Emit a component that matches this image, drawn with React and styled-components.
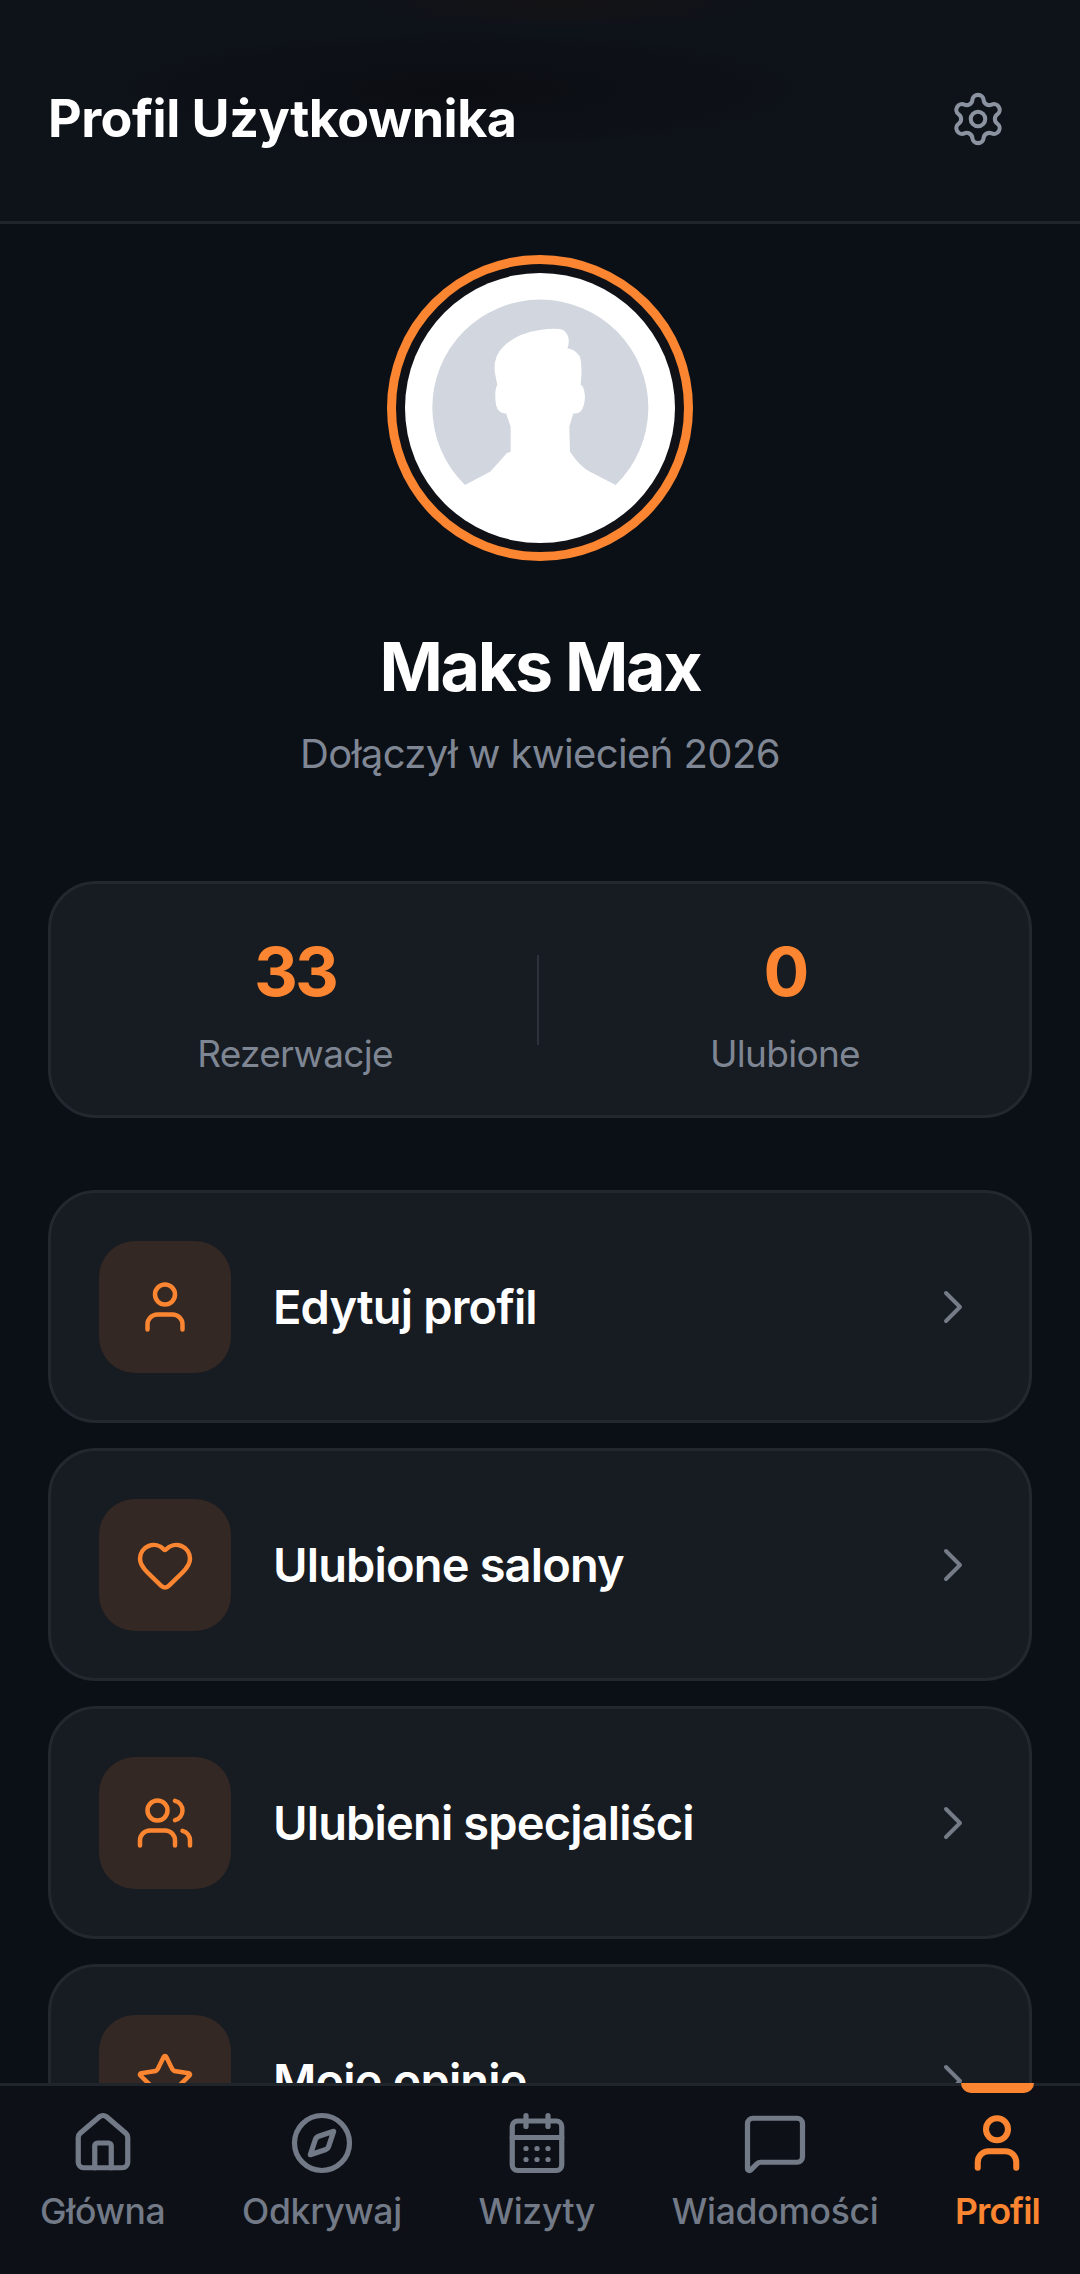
import React from 'react';
import styled, { createGlobalStyle } from 'styled-components';
import {
  Settings, User, Heart, Users, Star, ChevronRight, House, Compass, CalendarDays, MessageSquare,
} from 'lucide-react';

const Global = createGlobalStyle`
  html, body { margin: 0; padding: 0; background: #0b0f16; }
  * { box-sizing: border-box; }
`

const orange = '#fb8530';

const Screen = styled.div`
  width: 1080px;
  height: 2274px;
  display: flex;
  flex-direction: column;
  overflow: hidden;
  background: #0b0f16;
  color: #fff;
  font-family: Inter, "Noto Sans", sans-serif;
`
const Header = styled.header`
  flex: none;
  height: 224px;
  padding: 16px 48px 0 48px;
  display: flex;
  align-items: center;
  justify-content: space-between;
  background:
    radial-gradient(ellipse 360px 60px at 460px 90px, rgba(8, 9, 12, 0.55), transparent),
    radial-gradient(ellipse 200px 24px at 560px 4px, rgba(30, 20, 14, 0.35), transparent),
    #0e1219;
  border-bottom: 3px solid #20242b;
`
const Title = styled.h1`
  margin: 0;
  font-size: 52px;
  font-weight: 700;
  letter-spacing: -0.5px;
`
const SettingsButton = styled.div`
  display: flex;
  margin-right: 25px;
  color: #8b92a0;
`
const Content = styled.main`
  flex: 1;
  min-height: 0;
  overflow: hidden;
  padding: 31px 48px 0;
  display: flex;
  flex-direction: column;
`
const Profile = styled.section`
  display: flex;
  flex-direction: column;
  align-items: center;
`
const AvatarRing = styled.div`
  width: 306px;
  height: 306px;
  padding: 9px;
  border-radius: 50%;
  border: 9px solid ${orange};
  background: #0f1116;
`
const AvatarDisc = styled.svg`
  display: block;
  width: 100%;
  height: 100%;
  border-radius: 50%;
  background: #fff;
`
const Name = styled.h2`
  margin: 63px 0 0;
  font-size: 68px;
  line-height: 84px;
  font-weight: 700;
  letter-spacing: -2.2px;
`
const Joined = styled.p`
  margin: 20px 0 0;
  font-size: 40px;
  line-height: 52px;
  letter-spacing: -0.6px;
  color: #808794;
`
const StatsCard = styled.section`
  margin-top: 101px;
  height: 237px;
  flex: none;
  display: flex;
  align-items: center;
  background: #171b22;
  border: 3px solid #23282f;
  border-radius: 48px;
`
const Stat = styled.div`
  flex: 1;
  padding-top: 7px;
  display: flex;
  flex-direction: column;
  align-items: center;
`
const StatValue = styled.div`
  font-size: 68px;
  line-height: 84px;
  font-weight: 700;
  letter-spacing: -3px;
  color: ${orange};
`
const StatLabel = styled.div`
  margin-top: 17px;
  font-size: 37px;
  line-height: 48px;
  letter-spacing: -0.7px;
  color: #7f8693;
`
const StatDivider = styled.div`
  width: 2px;
  height: 90px;
  margin: 0 2px 0 -2px;
  background: #2d323a;
`
const Menu = styled.nav`
  margin-top: 72px;
  display: flex;
  flex-direction: column;
  gap: 25px;
`
const MenuRow = styled.div`
  flex: none;
  height: 233px;
  padding: 0 48px;
  display: flex;
  align-items: center;
  background: #171b22;
  border: 3px solid #23282f;
  border-radius: 48px;
`
const IconTile = styled.div`
  flex: none;
  width: 132px;
  height: 132px;
  display: flex;
  align-items: center;
  justify-content: center;
  border-radius: 36px;
  background: #332823;
  color: ${orange};
`
const MenuLabel = styled.span`
  flex: 1;
  margin-left: 42px;
  font-size: 47px;
  font-weight: 600;
  letter-spacing: -0.85px;
`
const Chevron = styled.div`
  display: flex;
  color: #757c88;
`
const BottomNav = styled.footer`
  flex: none;
  position: relative;
  height: 191px;
  padding: 23px 40px 0;
  display: flex;
  justify-content: space-between;
  background: #0d1117;
  border-top: 3px solid #20242b;
`
const NavItem = styled.div`
  position: relative;
  display: flex;
  flex-direction: column;
  align-items: center;
  color: ${(p) => (p.$active ? orange : '#737a87')};
`
const NavIcon = styled.div`
  height: 68px;
  display: flex;
  align-items: center;
  justify-content: center;
`
const NavLabel = styled.span`
  margin-top: 11px;
  font-size: 35.5px;
  line-height: 48px;
  font-weight: ${(p) => (p.$active ? 600 : 500)};
  letter-spacing: ${(p) => (p.$active ? '-0.9px' : '-0.3px')};
`
const ActiveMark = styled.div`
  position: absolute;
  top: -26px;
  left: 50%;
  width: 73px;
  height: 10px;
  margin-left: -36px;
  background: ${orange};
  border-radius: 0 0 10px 10px;
`

const menu = [
  { label: 'Edytuj profil', Icon: User },
  { label: 'Ulubione salony', Icon: Heart },
  { label: 'Ulubieni specjaliści', Icon: Users },
  { label: 'Moje opinie', Icon: Star },
];

const tabs = [
  { label: 'Główna', Icon: House },
  { label: 'Odkrywaj', Icon: Compass },
  { label: 'Wizyty', Icon: CalendarDays },
  { label: 'Wiadomości', Icon: MessageSquare },
  { label: 'Profil', Icon: User, active: true },
];

const App = () => (
  <Screen>
    <Global />
    <Header>
      <Title>Profil Użytkownika</Title>
      <SettingsButton><Settings size={58} strokeWidth={1.7} /></SettingsButton>
    </Header>
    <Content>
      <Profile>
        <AvatarRing>
          <AvatarDisc viewBox="135 99 810 810">
            <path
              fill="#d1d6df"
              d="M315 735 A324 324 0 1 1 767 735 L690 695 Q660 680 630 635 L628 560 L640 520 Q672 525 675 470 Q672 436 662 435 Q668 380 660 350 Q645 328 622 325 Q635 290 610 270 Q590 262 540 270 Q470 280 430 320 Q398 350 405 400 L412 435 Q402 450 408 495 Q415 522 438 520 L452 560 L452 635 L440 640 Q415 670 390 695 Z"
            />
          </AvatarDisc>
        </AvatarRing>
        <Name>Maks Max</Name>
        <Joined>Dołączył w kwiecień 2026</Joined>
      </Profile>
      <StatsCard>
        <Stat>
          <StatValue>33</StatValue>
          <StatLabel>Rezerwacje</StatLabel>
        </Stat>
        <StatDivider />
        <Stat>
          <StatValue>0</StatValue>
          <StatLabel>Ulubione</StatLabel>
        </Stat>
      </StatsCard>
      <Menu>
        {menu.map(({ label, Icon }) => (
          <MenuRow key={label}>
            <IconTile><Icon size={60} strokeWidth={1.8} /></IconTile>
            <MenuLabel>{label}</MenuLabel>
            <Chevron><ChevronRight size={56} strokeWidth={1.7} /></Chevron>
          </MenuRow>
        ))}
      </Menu>
    </Content>
    <BottomNav>
      {tabs.map(({ label, Icon, active }) => (
        <NavItem key={label} $active={active}>
          {active && <ActiveMark />}
          <NavIcon><Icon size={66} strokeWidth={active ? 2.2 : 1.9} /></NavIcon>
          <NavLabel $active={active}>{label}</NavLabel>
        </NavItem>
      ))}
    </BottomNav>
  </Screen>
)

export default App;
